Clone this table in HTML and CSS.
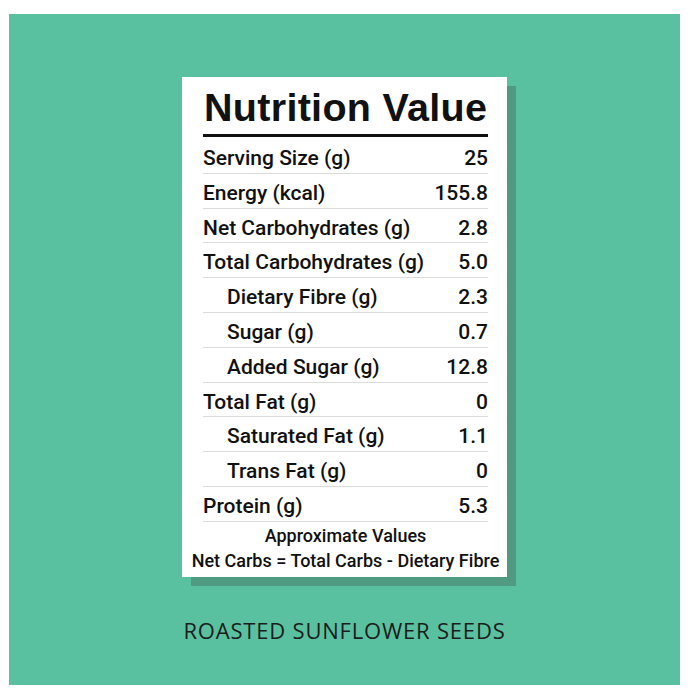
FILE: index.html
```html
<!DOCTYPE html>
<html lang="en">
<head>
<meta charset="utf-8">
<title>Nutrition Value - Roasted Sunflower Seeds</title>
<link rel="stylesheet" href="styles.css">
</head>
<body>
  <main class="panel">
    <section class="card">
      <h1 class="card-title">Nutrition Value</h1>
      <div class="rows">
        <div class="row"><span class="label">Serving Size (g)</span><span class="value">25</span></div>
        <div class="row"><span class="label">Energy (kcal)</span><span class="value">155.8</span></div>
        <div class="row"><span class="label">Net Carbohydrates (g)</span><span class="value">2.8</span></div>
        <div class="row"><span class="label">Total Carbohydrates (g)</span><span class="value">5.0</span></div>
        <div class="row row-sub"><span class="label">Dietary Fibre (g)</span><span class="value">2.3</span></div>
        <div class="row row-sub"><span class="label">Sugar (g)</span><span class="value">0.7</span></div>
        <div class="row row-sub"><span class="label">Added Sugar (g)</span><span class="value">12.8</span></div>
        <div class="row"><span class="label">Total Fat (g)</span><span class="value">0</span></div>
        <div class="row row-sub"><span class="label">Saturated Fat (g)</span><span class="value">1.1</span></div>
        <div class="row row-sub"><span class="label">Trans Fat (g)</span><span class="value">0</span></div>
        <div class="row"><span class="label">Protein (g)</span><span class="value">5.3</span></div>
      </div>
      <div class="notes">
        <p class="note">Approximate Values</p>
        <p class="note">Net Carbs = Total Carbs - Dietary Fibre</p>
      </div>
    </section>
    <p class="product-name">ROASTED SUNFLOWER SEEDS</p>
  </main>
</body>
</html>
```
FILE: styles.css
```css
html, body {
  margin: 0;
  padding: 0;
  background: #ffffff;
}

body {
  padding: 14px 0 0 9px;
}

.panel {
  width: 671px;
  height: 671px;
  box-sizing: border-box;
  background: #5ac1a0;
  display: flex;
  flex-direction: column;
  align-items: center;
  padding-top: 63px;
}

.card {
  width: 325px;
  box-sizing: border-box;
  background: #ffffff;
  padding: 7.5px 19px 3.5px 21px;
  box-shadow: 9px 9px 0 #4f9a80;
  color: #111111;
  font-family: Roboto, "Liberation Sans", sans-serif;
}

.card-title {
  margin: 0;
  font-family: "Liberation Sans", Arial, sans-serif;
  font-weight: 700;
  font-size: 39.5px;
  line-height: 44px;
  letter-spacing: 0.3px;
  padding: 0 0 5.5px 1px;
  border-bottom: 3px solid #111111;
  white-space: nowrap;
}

.rows {
  margin-top: 2px;
}

.row {
  display: flex;
  justify-content: space-between;
  align-items: baseline;
  font-size: 21px;
  font-weight: 500;
  line-height: 27.8px;
  padding-top: 6px;
  border-bottom: 1px solid #dcdcdc;
  white-space: nowrap;
}

.row-sub .label {
  padding-left: 24px;
}

.value {
  text-align: right;
}

.notes {
  display: flex;
  flex-direction: column;
  align-items: center;
  padding-top: 2.5px;
}

.note {
  margin: 0;
  font-size: 18px;
  font-weight: 500;
  line-height: 24.5px;
  white-space: nowrap;
}

.product-name {
  margin: 39px 0 0 0;
  font-family: "Open Sans", "Liberation Sans", sans-serif;
  font-weight: 400;
  font-size: 22px;
  line-height: 28px;
  letter-spacing: 0.8px;
  color: #1c1c1c;
  white-space: nowrap;
}
```
